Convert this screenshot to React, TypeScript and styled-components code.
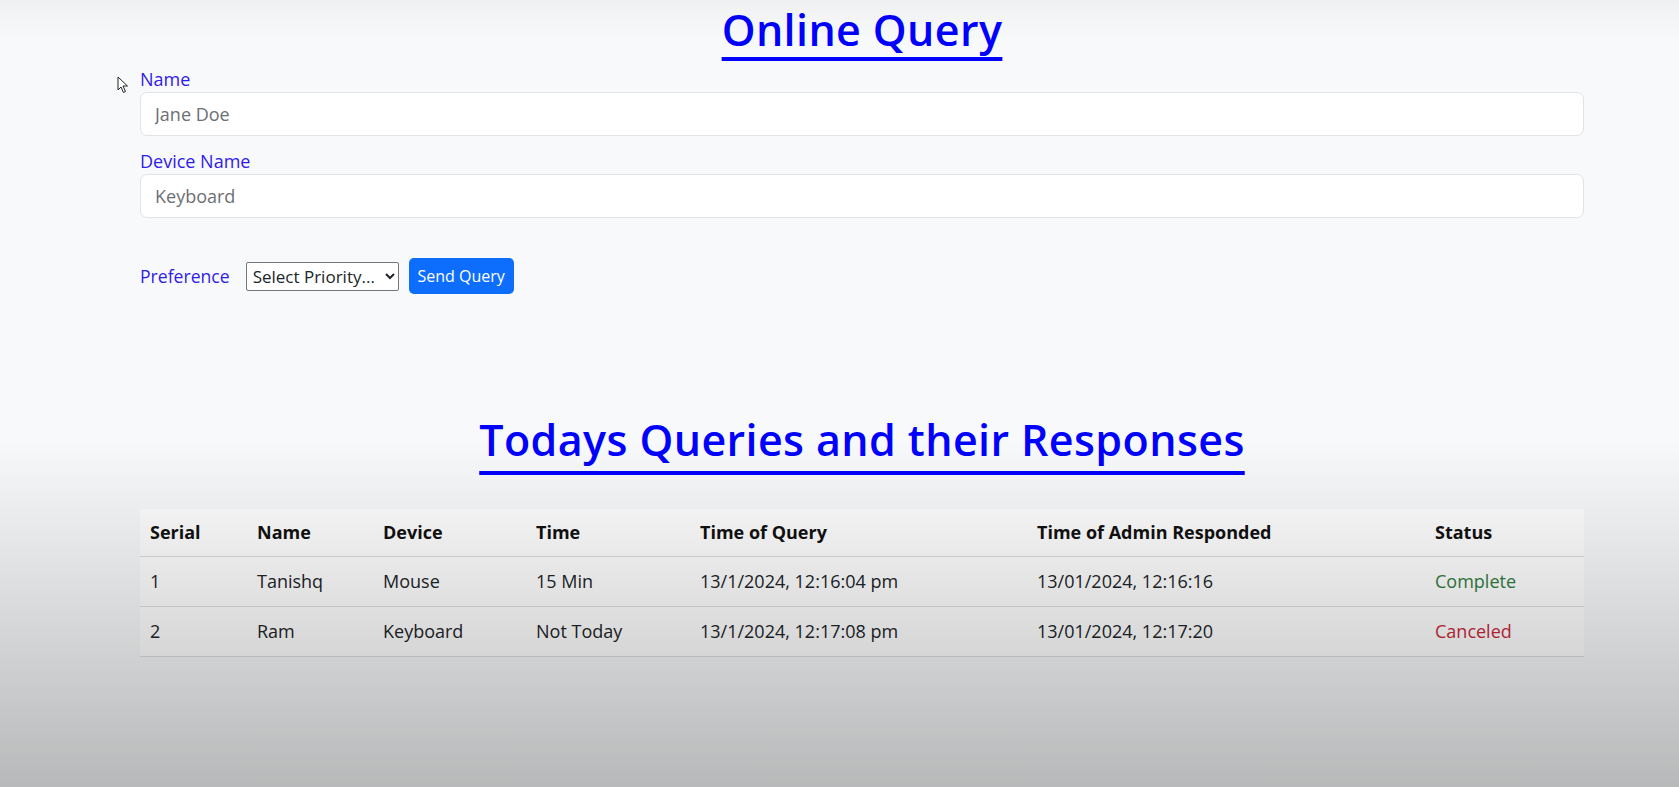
import React from "react";
import styled, { createGlobalStyle } from "styled-components";

const GlobalStyle = createGlobalStyle`
  * { box-sizing: border-box; }
  html, body { margin: 0; padding: 0; }
  body {
    background: #f8f9fa;
    font-family: "Open Sans", "Noto Sans", sans-serif;
    color: #212529;
    min-height: 787px;
  }
`;

const Page = styled.div`
  position: relative;
  min-height: 787px;
  overflow: hidden;
`;

const Container = styled.div`
  margin-left: 140px;
  width: 1444px;
  display: flex;
  flex-direction: column;
`;

const Title = styled.h1<{ $top: number; $ul: number }>`
  margin: ${(p) => p.$top}px 0 0;
  text-align: center;
  font-size: 43px;
  line-height: 60px;
  font-weight: 600;
  letter-spacing: 0.4px;
  color: #0000ff;
  span {
    text-decoration: underline;
    text-decoration-thickness: 4px;
    text-underline-offset: ${(p) => p.$ul}px;
    text-decoration-skip-ink: none;
  }
`;

const Form = styled.form`
  display: flex;
  flex-direction: column;
  margin-top: 7px;
`;

const Label = styled.label<{ $gap?: number }>`
  display: block;
  margin-top: ${(p) => p.$gap ?? 0}px;
  font-size: 18px;
  line-height: 24px;
  color: #2f1bea;
  margin-bottom: 1px;
`;

const Input = styled.input`
  width: 100%;
  height: 44px;
  padding: 0 14px;
  border: 1px solid #e1e3e6;
  border-radius: 7px;
  background: #fff;
  font-family: inherit;
  font-size: 18px;
  color: #212529;
  outline: none;
  &::placeholder { color: #6c6f73; }
`;

const ActionRow = styled.div`
  display: flex;
  align-items: center;
  margin-top: 40px;
  height: 36px;
`;

const RowLabel = styled.span`
  font-size: 17.6px;
  color: #2f1bea;
  margin-right: 16px;
`;

const Select = styled.select`
  width: 153px;
  height: 29px;
  font-family: inherit;
  font-size: 17px;
  color: #212529;
  background: #fff;
  border: 1px solid #767676;
  border-radius: 2px;
  padding: 0 2px;
  margin-right: 10px;
`;

const Button = styled.button`
  width: 105px;
  height: 36px;
  border: none;
  border-radius: 5px;
  background: #0d6efd;
  color: #fff;
  font-family: inherit;
  font-size: 16px;
  padding: 0;
`;

const Table = styled.table`
  margin-top: 39px;
  width: 100%;
  border-collapse: collapse;
  table-layout: fixed;
  font-size: 18px;
  background: #fff;
`;

const Th = styled.th<{ $w: number }>`
  width: ${(p) => p.$w}px;
  text-align: left;
  font-weight: 700;
  padding: 0 10px;
  height: 47px;
  border-bottom: 1px solid #dcdfe2;
  color: #111;
`;

const Td = styled.td<{ $tone?: "ok" | "bad" }>`
  padding: 0 10px;
  height: 50px;
  border-bottom: 1px solid #dcdfe2;
  color: ${(p) => (p.$tone === "ok" ? "#2f7d3e" : p.$tone === "bad" ? "#c8283a" : "#212529")};
`;

const Shade = styled.div`
  position: absolute;
  inset: 0;
  pointer-events: none;
  background: linear-gradient(
    to bottom,
    rgba(0, 0, 0, 0.035) 0px,
    rgba(0, 0, 0, 0) 40px,
    rgba(0, 0, 0, 0) 440px,
    rgba(0, 0, 0, 0.26) 787px
  );
`;

const Cursor = styled.svg`
  position: absolute;
  left: 117px;
  top: 76px;
  pointer-events: none;
`;

const columns = [
  { label: "Serial", w: 107 },
  { label: "Name", w: 126 },
  { label: "Device", w: 153 },
  { label: "Time", w: 164 },
  { label: "Time of Query", w: 337 },
  { label: "Time of Admin Responded", w: 398 },
  { label: "Status", w: 159 },
];

const rows = [
  { serial: "1", name: "Tanishq", device: "Mouse", time: "15 Min", query: "13/1/2024, 12:16:04 pm", admin: "13/01/2024, 12:16:16", status: "Complete", tone: "ok" as const },
  { serial: "2", name: "Ram", device: "Keyboard", time: "Not Today", query: "13/1/2024, 12:17:08 pm", admin: "13/01/2024, 12:17:20", status: "Canceled", tone: "bad" as const },
];

export default function App() {
  return (
    <Page>
      <GlobalStyle />
      <Container>
        <Title $top={0} $ul={11}><span>Online Query</span></Title>
        <Form onSubmit={(e) => e.preventDefault()}>
          <Label>Name</Label>
          <Input placeholder="Jane Doe" />
          <Label $gap={13}>Device Name</Label>
          <Input placeholder="Keyboard" />
          <ActionRow>
            <RowLabel>Preference</RowLabel>
            <Select defaultValue="">
              <option value="">Select Priority...</option>
              <option>High</option>
              <option>Low</option>
            </Select>
            <Button type="submit">Send Query</Button>
          </ActionRow>
        </Form>
        <Title $top={116} $ul={15}><span>Todays Queries and their Responses</span></Title>
        <Table>
          <thead>
            <tr>
              {columns.map((c) => (
                <Th key={c.label} $w={c.w}>{c.label}</Th>
              ))}
            </tr>
          </thead>
          <tbody>
            {rows.map((r) => (
              <tr key={r.serial}>
                <Td>{r.serial}</Td>
                <Td>{r.name}</Td>
                <Td>{r.device}</Td>
                <Td>{r.time}</Td>
                <Td>{r.query}</Td>
                <Td>{r.admin}</Td>
                <Td $tone={r.tone}>{r.status}</Td>
              </tr>
            ))}
          </tbody>
        </Table>
      </Container>
      <Shade />
      <Cursor width="12" height="18" viewBox="0 0 12 18">
        <path d="M1 1 L1 14 L4 11 L6.5 16.5 L8.5 15.5 L6 10 L10.5 10 Z" fill="#fff" stroke="#222" strokeWidth="1" strokeLinejoin="round" />
      </Cursor>
    </Page>
  );
}
